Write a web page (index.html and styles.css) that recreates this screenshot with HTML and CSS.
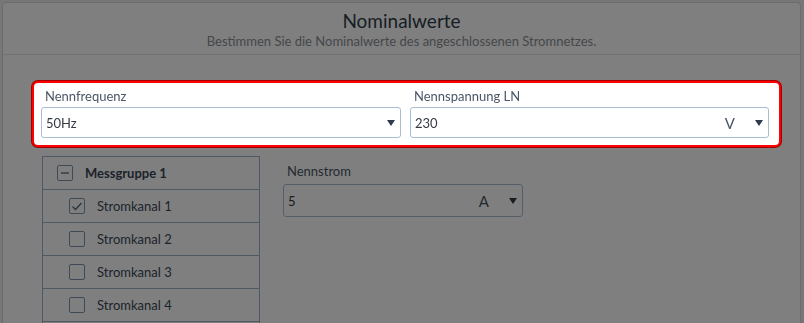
FILE: index.html
```html
<!DOCTYPE html>
<html lang="de">
<head>
<meta charset="utf-8">
<title>Nominalwerte</title>
<link rel="stylesheet" href="styles.css">
</head>
<body>
<div class="page">
  <section class="card">
    <header class="card-head">
      <h1 class="title">Nominalwerte</h1>
      <p class="subtitle">Bestimmen Sie die Nominalwerte des angeschlossenen Stromnetzes.</p>
    </header>
    <div class="card-body">
      <div class="highlight">
        <div class="field">
          <div class="label">Nennfrequenz</div>
          <div class="select">
            <span class="value">50Hz</span>
            <svg class="arrow" width="8" height="6" viewBox="0 0 8 6"><path d="M0 0H8L4 6Z"/></svg>
          </div>
        </div>
        <div class="field">
          <div class="label">Nennspannung LN</div>
          <div class="select">
            <span class="value">230</span>
            <span class="unit">V</span>
            <svg class="arrow" width="8" height="6" viewBox="0 0 8 6"><path d="M0 0H8L4 6Z"/></svg>
          </div>
        </div>
      </div>
      <div class="lower">
        <ul class="tree">
          <li class="tree-row group">
            <span class="box"><svg width="16" height="16" viewBox="0 0 16 16"><path d="M4 8H12"/></svg></span>
            <span class="group-name">Messgruppe 1</span>
          </li>
          <li class="tree-row child">
            <span class="box"><svg width="16" height="16" viewBox="0 0 16 16"><path d="M3.5 8.5L6.5 11.5L12.5 5"/></svg></span>
            <span>Stromkanal 1</span>
          </li>
          <li class="tree-row child"><span class="box"></span><span>Stromkanal 2</span></li>
          <li class="tree-row child"><span class="box"></span><span>Stromkanal 3</span></li>
          <li class="tree-row child"><span class="box"></span><span>Stromkanal 4</span></li>
          <li class="tree-row child empty"></li>
        </ul>
        <div class="field current">
          <div class="label">Nennstrom</div>
          <div class="select">
            <span class="value">5</span>
            <span class="unit">A</span>
            <svg class="arrow" width="8" height="6" viewBox="0 0 8 6"><path d="M0 0H8L4 6Z"/></svg>
          </div>
        </div>
      </div>
    </div>
  </section>
  <div class="overlay"></div>
</div>
</body>
</html>
```

FILE: styles.css
```css
* { box-sizing: border-box; }
html, body { margin: 0; padding: 0; height: 100%; overflow: hidden; }
body {
  font-family: Lato, "Open Sans", "Liberation Sans", sans-serif;
  background: #efefef;
  color: #3a4756;
}
.page {
  padding: 2px 3px 0 2px;
  height: 100%;
}
.card {
  background: #ffffff;
  border: 1px solid #d8d8d8;
  border-radius: 4px;
  height: 340px;
}
.card-head {
  text-align: center;
  border-bottom: 1px solid #e4e4e4;
  padding: 7px 0 5px;
  height: 52px;
}
.title {
  margin: 0;
  font-size: 19px;
  font-weight: 400;
  color: #2f3d4d;
  line-height: 22px;
}
.subtitle {
  margin: 1px 0 0;
  font-size: 13px;
  color: #8a8f96;
  line-height: 16px;
}
.card-body {
  padding: 26px 19px 0 29px;
}
.highlight {
  position: relative;
  z-index: 2;
  background: #ffffff;
  border: 2px solid #ff0000;
  border-radius: 6px;
  display: grid;
  grid-template-columns: 360px 359px;
  column-gap: 9px;
  padding: 2px 10px 7px 7px;
  box-shadow: 0 0 0 1px #a00000;
}
.field { display: flex; flex-direction: column; }
.label {
  font-size: 13px;
  line-height: 16px;
  color: #4a5666;
  padding: 3px 0 0 4px;
  height: 22px;
}
.select {
  height: 31px;
  border: 1px solid #a9bdd0;
  border-radius: 3px;
  display: flex;
  align-items: center;
  padding: 0 5px 0 4px;
  font-size: 13px;
  color: #333a44;
}
.value { flex: 1; }
.unit {
  font-size: 15px;
  margin-right: 20px;
  color: #4a5666;
}
.arrow { fill: #2c3a4b; }
.lower {
  display: flex;
  gap: 23px;
  margin-top: 9px;
  padding-left: 10px;
}
.tree {
  list-style: none;
  margin: 0;
  padding: 0;
  width: 218px;
  border: 1px solid #9fb2c8;
  border-bottom: none;
}
.tree-row {
  height: 33px;
  display: flex;
  align-items: center;
  font-size: 13px;
  color: #3a4756;
  border-bottom: 1px solid #9fb2c8;
}
.tree-row.group { padding-left: 14px; }
.tree-row.child { padding-left: 26px; }
.group-name { font-weight: 700; }
.box {
  width: 16px;
  height: 16px;
  border: 1px solid #7f95ae;
  border-radius: 2px;
  margin-right: 12px;
  display: flex;
  align-items: center;
  justify-content: center;
}
.box svg {
  fill: none;
  stroke: #52677f;
  stroke-width: 1.3;
  margin: -1px;
}
.current {
  width: 240px;
  padding-top: 4px;
}
.current .label { height: 24px; }
.current .select { height: 33px; }
.overlay {
  position: fixed;
  inset: 0;
  background: rgba(0, 0, 0, 0.5);
  z-index: 1;
}
```
